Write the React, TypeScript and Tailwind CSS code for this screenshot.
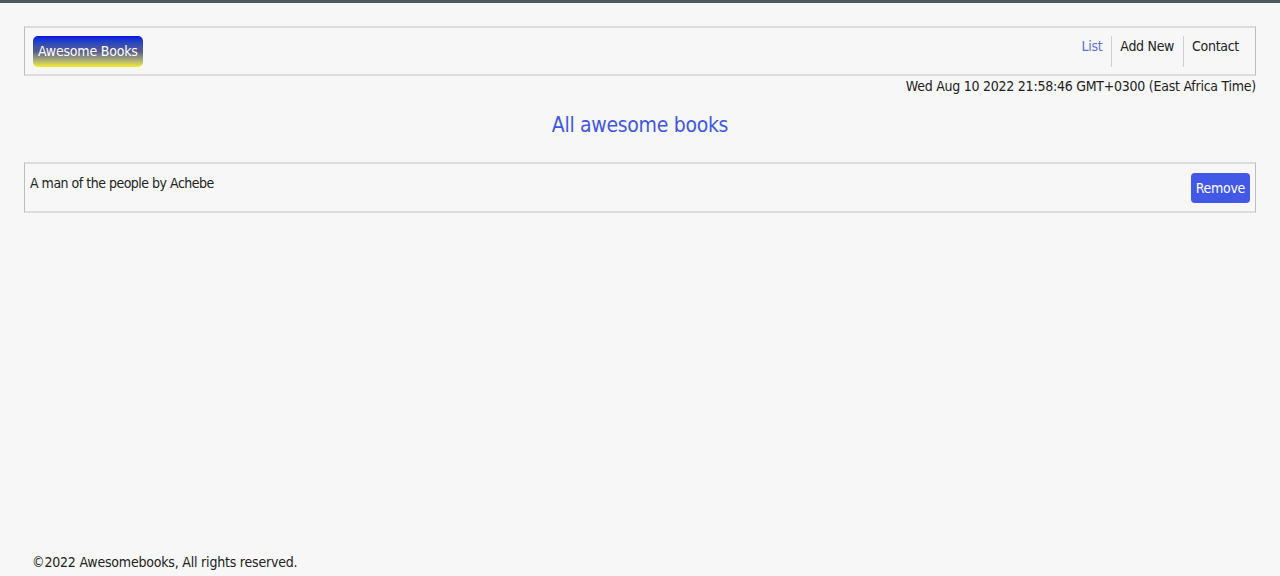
import React from "react";

const font = { fontFamily: '"DejaVu Sans Condensed", "Liberation Sans Narrow", "Roboto", sans-serif' };

export default function App() {
  return (
    <div className="min-h-[576px] bg-[#f7f7f7] text-[#222] flex flex-col" style={font}>
      <div className="h-[3px] bg-[#4b5a61]" />
      <div className="px-6 pt-[23px] flex flex-col flex-1">
        <header className="h-[50px] border border-[#bdbdbd] border-t-2 border-b-2 border-t-[#dcdcdc] border-b-[#dcdcdc] flex items-center justify-between pl-2 pr-[16px]">
          <div className="h-[31px] px-[5px] rounded-[5px] bg-gradient-to-b from-[#0a0ae6] via-[#5a5a8a] to-[#f5ee0a] text-white text-[14px] flex items-center tracking-[-0.2px]">
            Awesome Books
          </div>
          <nav className="flex items-stretch h-[31px] text-[14px] tracking-[-0.3px]">
            <a className="pr-[9px] text-[#5d6fe0] flex items-start">List</a>
            <a className="pl-2 pr-[9px] border-l border-[#cfcfcf] flex items-start">Add New</a>
            <a className="pl-2 border-l border-[#cfcfcf] flex items-start">Contact</a>
          </nav>
        </header>
        <div className="text-right text-[14px] leading-[20px] tracking-[-0.25px]">
          Wed Aug 10 2022 21:58:46 GMT+0300 (East Africa Time)
        </div>
        <h1 className="text-center text-[21px] text-[#4157de] mt-[15px] leading-[28px] tracking-[-0.3px]">
          All awesome books
        </h1>
        <div className="mt-[23px] h-[51px] border border-[#bdbdbd] border-t-2 border-b-2 border-t-[#dcdcdc] border-b-[#dcdcdc] flex justify-between pl-[5px] pr-[5px]">
          <span className="text-[14px] mt-[10px] leading-[18px] tracking-[-0.5px]">A man of the people by Achebe</span>
          <button className="mt-[9px] h-[30px] px-[5px] rounded-[4px] bg-[#4159e6] text-white text-[14px] tracking-[-0.3px]">
            Remove
          </button>
        </div>
        <div className="flex-1" />
        <footer className="pl-2 pb-[4px] text-[14px] leading-[20px] tracking-[-0.2px]">
          ©2022 Awesomebooks, All rights reserved.
        </footer>
      </div>
    </div>
  );
}
